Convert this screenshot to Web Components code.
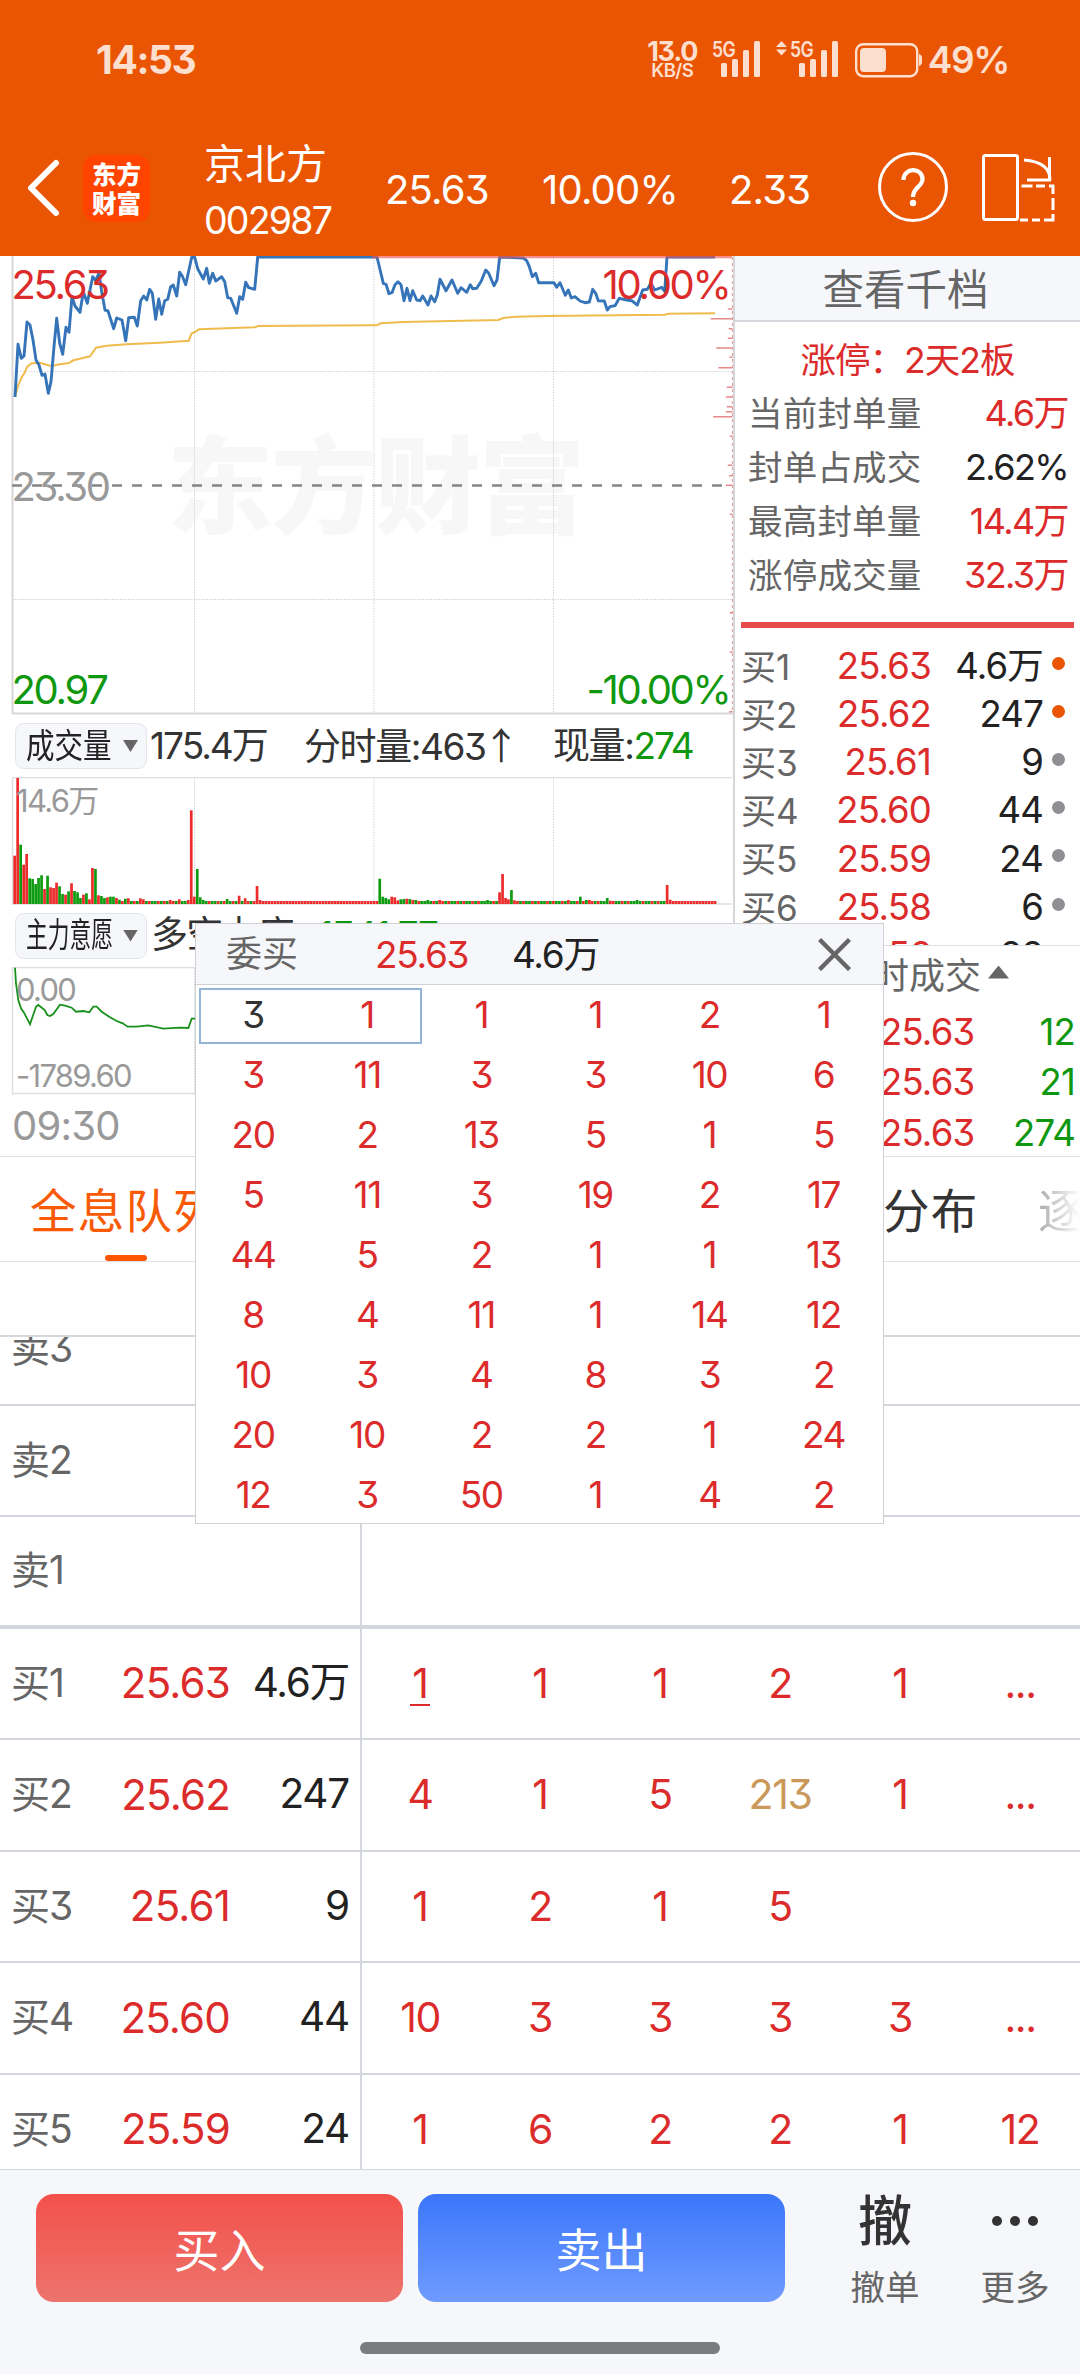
<!DOCTYPE html>
<html lang="zh-CN">
<head>
<meta charset="utf-8">
<title>京北方 002987</title>
<style>
  html, body { margin: 0; padding: 0; background: #fff; }
  body {
    width: 1080px; height: 2374px; overflow: hidden;
    font-family: Inter, "Noto Sans CJK SC", sans-serif;
    font-feature-settings: "cv09";
    line-height: 1.2;
    letter-spacing: -0.05em;
    color: #333;
    --up: #dc2b2b; --down: #0f980f; --grey: #666; --line: #d5d8dc; --panel: #f6f7fa;
  }
</style>
</head>
<body>
<stock-app></stock-app>

<script>
class BaseElement extends HTMLElement {
  constructor() {
    super();
    this.attachShadow({ mode: 'open' });
  }
  connectedCallback() {
    this.shadowRoot.innerHTML = this.render();
  }
}

class StatusBar extends BaseElement {
  render() {
    const bars = `<rect x="0" y="22" width="6" height="14" rx="1.5"/><rect x="11" y="18" width="6" height="18" rx="1.5"/>
      <rect x="22" y="9" width="6" height="27" rx="1.5"/><rect x="33" y="0" width="6" height="36" rx="1.5"/>`;
    return `
      <style>
        :host { display: flex; height: 120px; align-items: center; justify-content: space-between; padding: 0 71px 0 96px; box-sizing: border-box; color: #fddfcf; font-weight: 700; }
        .time { font-size: 39px; letter-spacing: -1.4px; }
        .right { display: flex; align-items: center; }
        .speed { width: 53px; text-align: center; margin-right: 13px; font-size: 27px; line-height: 21px; letter-spacing: -1.2px; }
        .speed small { display: block; font-size: 18.5px; line-height: 15px; letter-spacing: -0.6px; padding-top: 1px; font-weight: 600; }
        svg { display: block; fill: currentColor; font-size: 21px; font-weight: 600; overflow: visible; }
        .batt { margin: 2px 5px 0 16px; }
        .pct { font-size: 37px; letter-spacing: -1.4px; font-weight: 600; }
      </style>
      <span class="time">14:53</span>
      <div class="right">
        <div class="speed">13.0<small>KB/S</small></div>
        <svg width="49" height="37"><text x="0" y="15.5" textLength="23" lengthAdjust="spacingAndGlyphs">5G</text><g transform="translate(9,0)">${bars}</g></svg>
        <svg width="63" height="37" style="margin-left:15px"><path d="M0 6L5.5 0L11 6ZM0 8.5L5.5 14.5L11 8.5Z"/><text x="14" y="15.5" textLength="23" lengthAdjust="spacingAndGlyphs">5G</text><g transform="translate(23,0)">${bars}</g></svg>
        <svg class="batt" width="68" height="35"><rect x="1.2" y="1.2" width="61" height="32" rx="7" fill="none" stroke="currentColor" stroke-width="2.4"/><rect x="5" y="5" width="26" height="24" rx="4"/><path d="M64 11q3 1 3 4v4q0 3 -3 4z"/></svg>
        <span class="pct">49%</span>
      </div>`;
  }
}

class StockNav extends BaseElement {
  render() {
    return `
      <style>
        :host { display: flex; height: 136px; align-items: center; color: #fff; box-sizing: border-box; }
        .back { margin-left: 26px; width: 57px; }
        .logo { width: 67px; height: 67px; border-radius: 13px; background: #ff4400; font: 900 24.5px/29.5px "Noto Sans CJK SC", sans-serif; letter-spacing: 0; text-align: center; box-sizing: border-box; padding-top: 4px; }
        .name { width: 130px; margin-left: 54px; font-size: 41px; line-height: 54px; letter-spacing: 0; padding-top: 11px; }
        .name small { display: block; font-size: 37.5px; line-height: 59px; letter-spacing: -1.8px; white-space: nowrap; }
        .num { font-size: 40px; padding-top: 4px; box-sizing: border-box; }
        svg { display: block; fill: none; stroke: #fff; }
      </style>
      <svg class="back" width="57" height="60" stroke-width="6" stroke-linecap="round" stroke-linejoin="round"><path d="M30 5L5 30L30 55"/></svg>
      <div class="logo">东方<br>财富</div>
      <div class="name">京北方<small>002987</small></div>
      <span class="num" style="width:157px;margin-left:51px">25.63</span>
      <span class="num" style="width:187px">10.00%</span>
      <span class="num" style="width:148px">2.33</span>
      <svg width="72" height="72" stroke-width="3"><circle cx="36" cy="35" r="33.5"/><path stroke-width="4.2" d="M26.5 28c0-13 19-13 19-1c0 8-9.5 8-9.5 18" /><circle cx="36" cy="51" r="3.2" fill="#fff" stroke="none"/></svg>
      <svg width="76" height="72" stroke-width="3" style="margin-left:31px"><rect x="3.5" y="3.5" width="34" height="64" rx="2"/><path d="M44 8q26 2 26 20M69.5 5v23H47M41.5 34h11m3.5 0h9m4 0h4v8m0 4v12m0 4v6h-9m-4 0h-8m-4 0h-8"/></svg>`;
  }
}

/* price, volume and net-order panes share one x axis: a minute is 2.993px wide */
class IntradayChart extends BaseElement {
  points(list, dx, dy) {
    return list.map(([x, y]) => `${(x / 3 + dx).toFixed(1)},${(y / 3 + dy).toFixed(1)}`).join(' ');
  }
  volumeBars() {
    const vol = {
      0:'r145',1:'r378',2:'g178',3:'r118',4:'r150',5:'g77',6:'g75',7:'g60',8:'g78',9:'g86',10:'r45',11:'g85',12:'r50',13:'r48',14:'r64',
      15:'g53',16:'g30',17:'r28',18:'g38',19:'r62',20:'g39',21:'g35',22:'g18',23:'r28',24:'g32',25:'r14',26:'r108',27:'g105',28:'r26',29:'g24',
      30:'g18',31:'r20',32:'g22',33:'g22',34:'r18',35:'g13',36:'r9',37:'g16',38:'r17',39:'g9',40:'r9',41:'g9',42:'r17',43:'r14',44:'g9',
      52:'r12',55:'r14',58:'r12',59:'r281',60:'r22',61:'g105',62:'g20',63:'g12',71:'g15',75:'r25',77:'r17',81:'r54',82:'r12',
      122:'g76',123:'g22',124:'g18',125:'g14',126:'r22',127:'r20',128:'r11',129:'g14',130:'g15',131:'r16',132:'g15',133:'r12',134:'g12',138:'g12',142:'r12',
      158:'g12',162:'r35',163:'r90',164:'r18',165:'r14',166:'g42',167:'r11',185:'r12',189:'g22',191:'g12',192:'r12',198:'g18',199:'r10',208:'g12',218:'r57',219:'r13'
    };
    let out = '';
    for (let i = 0; i < 235; i++) {
      const locked = (i > 82 && i < 122) || i > 219;
      const v = vol[i] || ((locked || (i * 7) % 5 < 2 ? 'r' : 'g') + 9);
      const h = v.slice(1) / 3;
      out += `<rect x="${(13.3 + i * 2.993).toFixed(1)}" y="${(904 - h).toFixed(1)}" width="2.7" height="${h.toFixed(1)}" fill="${v[0] === 'r' ? '#ec2b2b' : '#0f9b0f'}"/>`;
    }
    return out;
  }
  render() {
    const priceA = [[45,441],[54,283],[64,325],[72,318],[81,216],[90,225],[99,270],[108,330],[117,345],[126,376],[135,372],[145,430],[153,395],[162,290],[170,205],[179,280],[188,313],[198,232],[207,247],[216,140],[225,168],[240,187],[250,125],[262,160],[278,80],[287,92],[297,68],[305,125],[315,180],[324,183],[341,236],[350,204],[366,210],[377,272],[386,203],[403,202],[412,228],[422,152],[431,138],[440,150],[449,118],[457,130],[467,208],[476,147],[485,193],[494,152],[503,148],[512,110],[520,105],[530,138],[539,67],[547,78],[557,104],[575,22],[584,22],[593,56],[610,87],[620,55],[628,100],[638,70],[647,93],[665,80],[674,95],[683,143],[692,145],[710,190],[719,140],[728,148],[737,97],[746,113],[764,118],[773,21]];
    const priceB = [[51,21],[70,100],[78,103],[87,131],[96,128],[105,104],[114,95],[123,104],[132,152],[141,115],[150,152],[158,122],[170,150],[180,152],[188,138],[204,165],[213,138],[224,155],[232,135],[240,88],[258,122],[276,90],[293,130],[303,113],[320,127],[331,104],[338,116],[350,115],[364,93],[377,60],[386,70],[402,107],[411,90],[419,21],[490,24],[500,32],[508,50],[517,80],[527,70],[536,98],[560,98],[582,98],[590,112],[600,98],[616,136],[625,120],[634,144],[645,140],[660,153],[675,158],[688,156],[698,118],[707,130],[715,152],[733,153],[742,180],[750,170],[765,167],[778,145],[800,150],[815,152],[832,165],[848,120],[862,118],[873,100],[884,120],[905,112],[914,124],[921,21],[1065,21]];
    const avgA = [[45,441],[55,405],[65,382],[73,370],[82,350],[95,340],[120,338],[145,346],[155,348],[180,343],[207,339],[220,331],[240,326],[270,319],[288,293],[320,287],[380,283],[480,278],[566,272],[575,250],[585,246],[597,238],[680,235],[764,232],[775,228],[1110,226]];
    const avgB = [[50,226],[62,220],[130,216],[415,210],[430,204],[465,200],[560,198],[915,194],[925,191],[1065,190]];
    const net = [[45,803],[48,850],[55,900],[63,925],[72,938],[90,973],[108,920],[115,915],[134,930],[142,945],[150,948],[160,942],[180,914],[195,917],[215,923],[228,935],[250,933],[268,937],[280,920],[290,920],[305,935],[330,952],[350,963],[368,970],[383,980],[410,980],[445,976],[490,986],[540,983],[565,984],[575,956],[590,956]];
    const ticks = [[177,14],[206,66],[236,11],[265,14],[294,49],[322,9],[353,43],[412,17],[441,20],[470,17],[485,20],[500,58],[559,8],[646,14],[677,10],[706,20],[793,8],[1088,8],[1206,8],[1385,10]];
    const tickPath = ticks.map(([y, w]) => `M732.5 ${(y / 3 + 250).toFixed(1)}h-${(w / 3).toFixed(1)}`).join('');
    const grid = (y1, y2) => `<path d="M194.5 ${y1}V${y2}M374 ${y1}V${y2}M553.5 ${y1}V${y2}" stroke="#d4d4d4" stroke-dasharray="1.5 1.2"/>`;
    return `
      <style>
        :host { display: block; width: 735px; border-right: 2px solid #d4d6da; box-sizing: border-box; flex: none; }
        svg { display: block; fill: none; overflow: hidden; }
        text { font-size: 40px; stroke: none; letter-spacing: -2.3px; }
        .mark { font: 900 106px "Noto Sans CJK SC", sans-serif; letter-spacing: 0; }
        .small { font-size: 31px; fill: #999; letter-spacing: -1.7px; }
        .row { display: flex; align-items: center; height: 63px; font-size: 37px; padding-left: 15px; white-space: nowrap; overflow: hidden; box-sizing: border-box; letter-spacing: -1.4px; }
        .pick { display: flex; align-items: center; width: 132px; height: 46px; background: var(--panel); border: 1px solid #e2e5ec; border-radius: 9px; box-sizing: border-box; color: #222; flex: none; }
        .pick span { display: block; width: 96px; padding-left: 10px; box-sizing: border-box; }
        .pick b { display: block; font-weight: 400; font-size: 34px; letter-spacing: 0; transform-origin: 0 50%; }
        .pick i { width: 15px; height: 12px; margin-left: 11px; background: var(--grey); clip-path: polygon(0 0, 100% 0, 50% 100%); }
        .down { color: var(--down); }
        .arrow { font-family: "Noto Sans CJK SC", sans-serif; letter-spacing: 0; margin-left: -3px; }
        .time { height: 61px; font-size: 40px; line-height: 62px; color: #999; padding-left: 12px; }
      </style>
      <svg width="733" height="459" viewBox="0 256 733 459">
        <text class="mark" x="167" y="525" fill="#f7f7f7" textLength="418">东方财富</text>
        <path d="M12.5 256V714M12 713.5H733" stroke="#d8d8d8" stroke-width="2"/>
        ${grid(257, 713)}
        <path d="M12 371.5H732M12 599.5H732" stroke="#d4d4d4" stroke-dasharray="1.5 1.2"/>
        <path d="M12 485.5H732" stroke="#858585" stroke-width="2.4" stroke-dasharray="10 10"/>
        <path d="M732.5 257V713" stroke="#eba5a5" stroke-width="1.3" stroke-dasharray="3 3"/>
        <path d="${tickPath}" stroke="#e88a8a" stroke-width="1.6"/>
        <polyline points="${this.points(avgA, 0, 250)} ${this.points(avgB, 360, 250)}" stroke="#efbb4d" stroke-width="2"/>
        <polyline points="${this.points(priceA, 0, 250)} ${this.points(priceB, 360, 250)}" stroke="#3574b8" stroke-width="2.9" stroke-linejoin="round"/>
        <path d="M372 257H732" stroke="#ee5555" stroke-opacity="0.65" stroke-width="2.5"/>
        <text x="11.5" y="299" fill="#dc2b2b">25.63</text>
        <text x="729.5" y="299" fill="#dc2b2b" text-anchor="end">10.00%</text>
        <text x="11.5" y="500.5" fill="#999">23.30</text>
        <text x="11.5" y="703.5" fill="#0f980f">20.97</text>
        <text x="729.5" y="703.5" fill="#0f980f" text-anchor="end">-10.00%</text>
      </svg>
      <div class="row" style="height:62px">
        <div class="pick"><span><b style="transform:scaleX(.84)">成交量</b></span><i></i></div>
        <span style="margin-left:3px;width:154px;letter-spacing:-2px">175.4万</span>
        <span style="width:249px">分时量:463<span class="arrow">↑</span></span>
        <span>现量:<span class="down" style="letter-spacing:-2px">274</span></span>
      </div>
      <svg width="733" height="128" viewBox="0 777 733 128">
        <path d="M12.5 777V905M12 777.5H732M12 904H732" stroke="#dedede" stroke-width="1.5"/>
        ${grid(778, 904)}
        ${this.volumeBars()}
        <text class="small" x="16" y="811.5">14.6万</text>
      </svg>
      <div class="row" style="height:62px;padding-bottom:1px">
        <div class="pick"><span><b style="transform:scaleX(.64)">主力意愿</b></span><i></i></div>
        <span style="margin-left:4px">多空力度:<span class="down">-1341.77</span></span>
      </div>
      <svg width="733" height="128" viewBox="0 967 733 128">
        <path d="M12.5 967V1095M12 967.5H732M12 1093.5H732" stroke="#dedede" stroke-width="1.5"/>
        ${grid(968, 1094)}
        <polyline points="${this.points(net, 0, 700)}" stroke="#17911a" stroke-width="1.8"/>
        <text class="small" x="16" y="1001">0.00</text>
        <text class="small" x="16" y="1087">-1789.60</text>
      </svg>
      <div class="time">09:30</div>`;
  }
}

class BidLevel extends BaseElement {
  render() {
    const dot = this.hasAttribute('hot') ? '#ea5504' : '#8e8e93';
    return `
      <style>
        :host { display: grid; grid-template-columns: 56px 134px 112px 1fr; align-items: center; height: 48.1px; padding-left: 6px; font-size: 36.5px; color: #222; flex: none; }
        span { text-align: right; white-space: nowrap; }
        .lv { color: var(--grey); text-align: left; font-size: 35px; letter-spacing: 0; }
        .p { color: var(--up); }
        i { width: 13px; height: 13px; border-radius: 50%; background: ${dot}; margin: -7px 0 0 9px; }
      </style>
      <span class="lv">${this.getAttribute('level')}</span>
      <span class="p">${this.getAttribute('price')}</span>
      <span>${this.getAttribute('vol')}</span><i></i>`;
  }
}

class SideQuote extends BaseElement {
  render() {
    const stat = (k, v, cls = '') => `<div class="stat"><span>${k}</span><span class="${cls}">${v}</span></div>`;
    const trade = v => `<div class="trade"><span>25.63</span><span class="down">${v}</span></div>`;
    return `
      <style>
        :host { display: flex; flex-direction: column; flex: 1; min-width: 0; }
        .head { height: 64px; line-height: 69px; background: var(--panel); border-bottom: 2px solid var(--line); text-align: center; color: var(--grey); font-size: 41.5px; letter-spacing: 0; flex: none; padding-right: 4px; }
        .limit { height: 65px; line-height: 78px; text-align: center; color: var(--up); font-size: 35.5px; letter-spacing: -1px; flex: none; }
        .stat { display: flex; justify-content: space-between; align-items: center; height: 54px; padding: 0 12px 0 13px; font-size: 34.5px; letter-spacing: 0.2px; color: var(--grey); flex: none; }
        .stat span + span { color: #222; font-size: 36px; letter-spacing: -1.6px; }
        .stat .up { color: var(--up); }
        .bar { height: 6px; margin: 19px 6px 0; background: #e74a4a; flex: none; }
        .levels { height: 302px; padding-top: 15px; overflow: hidden; border-bottom: 1px solid #dcdee2; display: flex; flex-direction: column; flex: none; }
        .deal { display: flex; align-items: center; height: 61px; padding-left: 102px; color: var(--grey); font-size: 36px; letter-spacing: 0; flex: none; }
        .deal i { width: 21px; height: 13px; margin: -9px 0 0 7px; background: var(--grey); clip-path: polygon(50% 0, 100% 100%, 0 100%); }
        .trade { display: flex; justify-content: space-between; align-items: center; height: 50.9px; padding: 0 5px 0 145px; font-size: 36.5px; color: var(--up); flex: none; }
        .down { color: var(--down); }
      </style>
      <div class="head">查看千档</div>
      <div class="limit">涨停：2天2板</div>
      ${stat('当前封单量', '4.6万', 'up')}
      ${stat('封单占成交', '2.62%')}
      ${stat('最高封单量', '14.4万', 'up')}
      ${stat('涨停成交量', '32.3万', 'up')}
      <div class="bar"></div>
      <div class="levels">
        <bid-level level="买1" price="25.63" vol="4.6万" hot></bid-level>
        <bid-level level="买2" price="25.62" vol="247" hot></bid-level>
        <bid-level level="买3" price="25.61" vol="9"></bid-level>
        <bid-level level="买4" price="25.60" vol="44"></bid-level>
        <bid-level level="买5" price="25.59" vol="24"></bid-level>
        <bid-level level="买6" price="25.58" vol="6"></bid-level>
        <bid-level level="买7" price="25.56" vol="22"></bid-level>
      </div>
      <div class="deal">分时成交<i></i></div>
      ${trade(12)}${trade(21)}${trade(274)}`;
  }
}

class QuoteTabs extends BaseElement {
  render() {
    return `
      <style>
        :host { display: flex; height: 106px; border-top: 1px solid #dfe1e5; border-bottom: 1px solid #dfe1e5; box-sizing: border-box; font-size: 46.5px; letter-spacing: 1.2px; line-height: 108px; white-space: nowrap; overflow: hidden; }
        .on { color: #f95a06; margin-left: 30px; width: 191px; position: relative; }
        .on::after { content: ""; position: absolute; left: 75px; bottom: 0; width: 42px; height: 6px; border-radius: 3px; background: #ff5500; }
        .tab { margin-left: 662px; width: 95px; }
        .fade { margin-left: 60px; width: 42px; overflow: hidden; background: linear-gradient(90deg, #aaa, #fff 42px); -webkit-background-clip: text; background-clip: text; color: transparent; }
      </style>
      <span class="on">全息队列</span><span class="tab">分布</span><span class="fade">逐</span>`;
  }
}

class QueueRow extends BaseElement {
  render() {
    const cells = (this.getAttribute('queue') || '').split(',').filter(Boolean);
    return `
      <style>
        :host { display: flex; height: 111.5px; align-items: center; border-bottom: 2px solid #d5d7de; box-sizing: border-box; font-size: 42px; color: #222; flex: none; }
        :host([last]) { border-bottom-width: 4px; }
        .left { display: grid; grid-template-columns: 75px 144px 119px; width: 362px; padding-left: 11px; height: 100%; align-items: center; box-sizing: border-box; border-right: 2px solid #d4d7de; text-align: right; white-space: nowrap; flex: none; }
        .lv { color: var(--grey); text-align: left; font-size: 39px; letter-spacing: -1px; }
        .p { color: var(--up); font-size: 42px; }
        .v { font-size: 40.5px; letter-spacing: -1.2px; }
        .cells { display: grid; grid-template-columns: repeat(6, 120px); text-align: center; color: var(--up); font-size: 41px; letter-spacing: -1.4px; margin-left: -2px; }
        .big { color: #c9985a; }
        u { text-decoration: none; border-bottom: 2px solid var(--up); padding: 0 2px; display: inline-block; line-height: 41px; margin-bottom: -3px; }
      </style>
      <div class="left">
        <span class="lv">${this.getAttribute('level')}</span>
        <span class="p">${this.getAttribute('price') || ''}</span>
        <span class="v">${this.getAttribute('vol') || ''}</span>
      </div>
      <div class="cells">${cells.map((c, i) => `<span class="${+c > 200 ? 'big' : ''}">${i === 0 && this.hasAttribute('mine') ? `<u>${c}</u>` : c}</span>`).join('')}</div>`;
  }
}

class QueueTable extends BaseElement {
  render() {
    return `
      <style>
        :host { display: flex; flex-direction: column; height: 907px; }
        .gap { height: 73px; border-bottom: 2px solid var(--line); flex: none; }
        .list { display: flex; flex-direction: column; justify-content: flex-end; height: 832px; overflow: hidden; }
        .list queue-row:last-child { margin-bottom: -17px; }
      </style>
      <div class="gap"></div>
      <div class="list">
        <queue-row level="卖3"></queue-row>
        <queue-row level="卖2"></queue-row>
        <queue-row level="卖1" last></queue-row>
        <queue-row level="买1" price="25.63" vol="4.6万" queue="1,1,1,2,1,..." mine></queue-row>
        <queue-row level="买2" price="25.62" vol="247" queue="4,1,5,213,1,..."></queue-row>
        <queue-row level="买3" price="25.61" vol="9" queue="1,2,1,5"></queue-row>
        <queue-row level="买4" price="25.60" vol="44" queue="10,3,3,3,3,..."></queue-row>
        <queue-row level="买5" price="25.59" vol="24" queue="1,6,2,2,1,12"></queue-row>
      </div>`;
  }
}

class QueuePopup extends BaseElement {
  render() {
    const orders = [
      [3,1,1,1,2,1], [3,11,3,3,10,6], [20,2,13,5,1,5],
      [5,11,3,19,2,17], [44,5,2,1,1,13], [8,4,11,1,14,12],
      [10,3,4,8,3,2], [20,10,2,2,1,24], [12,3,50,1,4,2]
    ];
    return `
      <style>
        :host { display: block; width: 689px; height: 601px; box-sizing: border-box; border: 1px solid #cfd1d5; background: #fff; }
        .head { display: flex; align-items: center; height: 61px; padding: 2px 32px 0 30px; background: var(--panel); border-bottom: 1px solid #cfd1d5; box-sizing: border-box; font-size: 37px; color: #222; letter-spacing: -1.3px; }
        .head span:first-child { color: var(--grey); width: 149px; font-size: 36px; letter-spacing: 0; }
        .head .price { color: var(--up); width: 137px; }
        svg { margin: -2px 0 0 auto; }
        .grid { position: relative; display: grid; grid-template-columns: repeat(6, 114.1px); grid-auto-rows: 60px; line-height: 60px; text-align: center; font-size: 37px; color: var(--up); letter-spacing: -1.4px; }
        .grid span:first-child { color: #333; }
        .sel { position: absolute; left: 3px; top: 3px; width: 223px; height: 56px; border: 2px solid #94b3d8; box-sizing: border-box; }
      </style>
      <div class="head"><span>委买</span><span class="price">25.63</span><span>4.6万</span>
        <svg width="33" height="33"><path d="M1.5 1.5L31.5 31.5M31.5 1.5L1.5 31.5" stroke="#666" stroke-width="4.4"/></svg>
      </div>
      <div class="grid">${orders.flat().map(n => `<span>${n}</span>`).join('')}<div class="sel"></div></div>`;
  }
}

class TradeFooter extends BaseElement {
  render() {
    return `
      <style>
        :host { display: block; height: 205px; background: var(--panel); border-top: 1px solid #d5d8d8; box-sizing: border-box; letter-spacing: 0; }
        .acts { display: flex; height: 172px; padding: 24px 0 0 36px; box-sizing: border-box; }
        button { width: 367px; height: 108px; border: 0; border-radius: 18px; color: #fff; font: inherit; font-size: 46px; line-height: 112px; padding: 0; margin-right: 15px; }
        .buy { background: linear-gradient(#f4504a, #ec746d); }
        .sell { background: linear-gradient(#3b76fa, #6f9bff); }
        .tool { width: 130px; display: flex; flex-direction: column; align-items: center; font-size: 34.5px; color: var(--grey); line-height: 54px; }
        .tool b { font-size: 54px; height: 67px; line-height: 56px; color: #333; font-weight: 500; }
        .home { width: 360px; height: 12px; border-radius: 6px; background: #7b7c7e; margin: 0 auto; }
      </style>
      <div class="acts">
        <button class="buy">买入</button><button class="sell">卖出</button>
        <div class="tool" style="margin-left:20px"><b>撤</b>撤单</div>
        <div class="tool"><b><svg width="48" height="54" fill="#333" style="display:block"><circle cx="6" cy="27" r="5"/><circle cx="24" cy="27" r="5"/><circle cx="42" cy="27" r="5"/></svg></b>更多</div>
      </div>
      <div class="home"></div>`;
  }
}

class StockApp extends BaseElement {
  render() {
    return `
      <style>
        :host { display: flex; flex-direction: column; position: relative; width: 1080px; height: 2374px; overflow: hidden; }
        header { background: #ea5504; height: 256px; box-sizing: border-box; }
        .market { display: flex; height: 900px; overflow: hidden; flex: none; }
        queue-popup { position: absolute; left: 195px; top: 923px; }
      </style>
      <header><status-bar></status-bar><stock-nav></stock-nav></header>
      <div class="market"><intraday-chart></intraday-chart><side-quote></side-quote></div>
      <quote-tabs></quote-tabs>
      <queue-table></queue-table>
      <trade-footer></trade-footer>
      <queue-popup></queue-popup>`;
  }
}

customElements.define('status-bar', StatusBar);
customElements.define('stock-nav', StockNav);
customElements.define('intraday-chart', IntradayChart);
customElements.define('bid-level', BidLevel);
customElements.define('side-quote', SideQuote);
customElements.define('quote-tabs', QuoteTabs);
customElements.define('queue-row', QueueRow);
customElements.define('queue-table', QueueTable);
customElements.define('queue-popup', QueuePopup);
customElements.define('trade-footer', TradeFooter);
customElements.define('stock-app', StockApp);
</script>
</body>
</html>
